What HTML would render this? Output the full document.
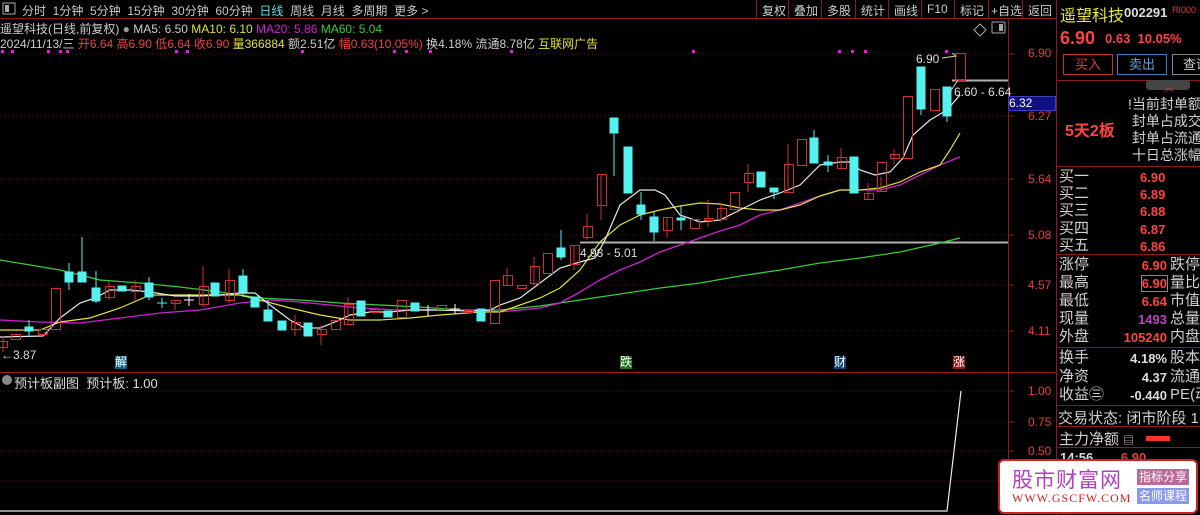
<!DOCTYPE html>
<html><head><meta charset="utf-8"><style>
*{margin:0;padding:0;box-sizing:border-box}
body{width:1200px;height:515px;background:#000;overflow:hidden;position:relative;font-family:"Liberation Sans","Noto Sans CJK SC",sans-serif;color:#ccc}
.a{position:absolute;white-space:nowrap}
.tb{font-size:12px;top:2px;color:#c8c8c8}
.rp{font-size:14px;color:#d0d0d0}
.r{color:#ff4444;font-weight:bold}
.bt{position:absolute;top:0;height:18px;border-left:1px solid #8b1a1a;font-size:12px;color:#ccc;padding:2px 0 0 5px}
</style></head><body>
<svg class="a" style="left:0;top:0" width="1200" height="515">
<line x1="0" y1="18.5" x2="1056" y2="18.5" stroke="#8b1a1a"/>
<line x1="1008.5" y1="18" x2="1008.5" y2="515" stroke="#8b1a1a"/>
<line x1="1056.5" y1="0" x2="1056.5" y2="515" stroke="#8b1a1a"/>
<line x1="0" y1="372.5" x2="1056" y2="372.5" stroke="#a01818"/>
<g stroke="#6a1010" stroke-dasharray="1,3">
<line x1="0" y1="54" x2="1008" y2="54"/><line x1="0" y1="116" x2="1008" y2="116"/><line x1="0" y1="179" x2="1008" y2="179"/><line x1="0" y1="235" x2="1008" y2="235"/><line x1="0" y1="285" x2="1008" y2="285"/><line x1="0" y1="331" x2="1008" y2="331"/>
<line x1="0" y1="391" x2="1008" y2="391"/><line x1="0" y1="422" x2="1008" y2="422"/><line x1="0" y1="451" x2="1008" y2="451"/><line x1="0" y1="481" x2="1008" y2="481"/>
</g>
<g stroke="#a01818"><line x1="1008" y1="54" x2="1014" y2="54"/><line x1="1008" y1="116" x2="1014" y2="116"/><line x1="1008" y1="179" x2="1014" y2="179"/><line x1="1008" y1="235" x2="1014" y2="235"/><line x1="1008" y1="285" x2="1014" y2="285"/><line x1="1008" y1="331" x2="1014" y2="331"/><line x1="1008" y1="391" x2="1014" y2="391"/><line x1="1008" y1="422" x2="1014" y2="422"/><line x1="1008" y1="451" x2="1014" y2="451"/></g>
<g fill="#e020e0">
<rect x="1" y="50" width="3" height="3"/><rect x="11" y="50" width="3" height="3"/><rect x="47" y="50" width="3" height="3"/><rect x="59" y="50" width="3" height="3"/><rect x="66" y="50" width="3" height="3"/><rect x="175" y="50" width="3" height="3"/><rect x="186" y="50" width="3" height="3"/><rect x="301" y="50" width="3" height="3"/><rect x="393" y="50" width="3" height="3"/><rect x="405" y="50" width="3" height="3"/><rect x="429" y="50" width="3" height="3"/><rect x="510" y="50" width="3" height="3"/><rect x="692" y="50" width="3" height="3"/><rect x="838" y="50" width="3" height="3"/><rect x="851" y="50" width="3" height="3"/><rect x="864" y="50" width="3" height="3"/><rect x="945" y="50" width="3" height="3"/>
</g>
<line x1="580" y1="242.5" x2="1008" y2="242.5" stroke="#b0b0b0" stroke-width="2"/>
<line x1="952" y1="80.5" x2="1008" y2="80.5" stroke="#b0b0b0" stroke-width="2"/>
<!-- MA lines -->
<polyline fill="none" stroke="#3cc83c" stroke-width="1.3" points="0,260 60,270 100,280 140,283 180,287 220,292 260,298 300,300 340,303 380,305 420,307 460,310 500,310 540,306 580,300 620,294 660,288 700,283 740,276 780,270 820,263 860,258 900,252 940,243 960,238"/>
<polyline fill="none" stroke="#d020d0" stroke-width="1.3" points="0,320 40,322 80,323 120,318 160,313 200,310 240,303 270,300 300,302 330,305 360,308 400,310 440,310 480,310 500,312 520,310 540,308 560,303 580,292 600,280 620,270 640,262 660,252 680,245 700,238 720,231 740,225 760,215 780,210 800,203 820,196 840,190 860,190 880,190 900,185 920,175 940,165 960,157"/>
<polyline fill="none" stroke="#e0e040" stroke-width="1.2" points="0,330 40,330 60,322 90,318 120,308 150,295 200,295 240,295 260,300 290,308 320,315 350,320 380,320 410,318 440,315 480,312 500,312 520,305 540,298 560,288 580,270 600,242 620,225 640,215 660,210 680,206 700,203 720,204 740,208 760,210 780,210 800,205 820,196 840,190 860,190 880,188 900,182 920,172 940,165 950,150 960,133"/>
<polyline fill="none" stroke="#e8e8e8" stroke-width="1.2" points="0,337 43,336 60,318 80,303 95,298 110,290 130,290 150,292 175,296 200,296 220,295 240,293 255,293 270,305 290,320 305,328 320,328 335,322 350,315 370,312 390,312 410,310 440,310 470,311 490,310 500,305 520,298 540,283 560,268 580,262 595,258 605,240 620,205 640,190 655,190 665,195 680,215 700,222 720,220 740,210 760,200 780,193 800,185 820,165 840,162 850,162 860,170 875,175 890,172 903,158 913,135 930,120 947,110 960,95"/>
<!-- candles -->
<g stroke="#d03030" fill="none">
<line x1="3" y1="336" x2="3" y2="352"/><rect x="-1.5" y="341.5" width="9" height="6"/>
<rect x="11.5" y="334.5" width="9" height="5"/>
<rect x="38.5" y="329.5" width="9" height="5"/>
<rect x="51.5" y="288.5" width="9" height="41"/>
<line x1="109" y1="281" x2="109" y2="300"/><rect x="105.5" y="286.5" width="9" height="11"/>
<line x1="135" y1="280" x2="135" y2="300"/><rect x="131.5" y="286.5" width="9" height="5"/>
<line x1="175" y1="301" x2="175" y2="310"/><rect x="171.5" y="300.5" width="9" height="3"/>
<line x1="203" y1="266" x2="203" y2="307"/><rect x="199.5" y="286.5" width="9" height="18"/>
<line x1="229" y1="269" x2="229" y2="303"/><rect x="225.5" y="280.5" width="9" height="20"/>
<line x1="295" y1="315" x2="295" y2="336"/><rect x="291.5" y="322.5" width="9" height="7"/>
<line x1="321" y1="325" x2="321" y2="345"/><rect x="317.5" y="329.5" width="9" height="5"/>
<rect x="331.5" y="320.5" width="9" height="9"/>
<line x1="348" y1="297" x2="348" y2="324"/><rect x="344.5" y="304.5" width="9" height="20"/>
<rect x="370.5" y="309.5" width="9" height="3"/>
<rect x="397.5" y="300.5" width="9" height="17"/>
<rect x="437.5" y="305.5" width="9" height="4"/>
<rect x="464.5" y="310.5" width="9" height="2"/>
<rect x="490.5" y="280.5" width="9" height="43"/>
<line x1="507" y1="268" x2="507" y2="286"/><rect x="503.5" y="275.5" width="9" height="10"/>
<rect x="517.5" y="285.5" width="9" height="3"/>
<line x1="534" y1="257" x2="534" y2="285"/><rect x="530.5" y="266.5" width="9" height="17"/>
<rect x="543.5" y="253.5" width="9" height="20"/>
<line x1="574" y1="245" x2="574" y2="270"/><rect x="570.5" y="245.5" width="9" height="19"/>
<line x1="587" y1="214" x2="587" y2="240"/><rect x="583.5" y="226.5" width="9" height="11"/>
<line x1="601" y1="174" x2="601" y2="220"/><rect x="597.5" y="174.5" width="9" height="31"/>
<line x1="667" y1="217" x2="667" y2="238"/><rect x="663.5" y="217.5" width="9" height="13"/>
<rect x="690.5" y="219.5" width="9" height="9"/>
<line x1="708" y1="200" x2="708" y2="227"/><rect x="704.5" y="218.5" width="9" height="2"/>
<line x1="721" y1="203" x2="721" y2="222"/><rect x="717.5" y="208.5" width="9" height="11"/>
<rect x="730.5" y="192.5" width="9" height="17"/>
<line x1="748" y1="164" x2="748" y2="192"/><rect x="744.5" y="173.5" width="9" height="9"/>
<line x1="788" y1="144" x2="788" y2="192"/><rect x="784.5" y="164.5" width="9" height="28"/>
<rect x="797.5" y="139.5" width="9" height="26"/>
<line x1="841" y1="148" x2="841" y2="168"/><rect x="837.5" y="157.5" width="9" height="11"/>
<line x1="868" y1="183" x2="868" y2="199"/><rect x="864.5" y="193.5" width="9" height="6"/>
<line x1="881" y1="177" x2="881" y2="191"/><rect x="877.5" y="162.5" width="9" height="29"/>
<line x1="894" y1="149" x2="894" y2="164"/><rect x="890.5" y="154.5" width="9" height="4"/>
<rect x="903.5" y="96.5" width="9" height="62"/>
<rect x="930.5" y="89.5" width="9" height="21"/>
<rect x="955.5" y="53.5" width="10" height="27"/>
</g>
<g fill="#55f0f0" stroke="#55f0f0">
<rect x="25" y="327" width="8" height="4"/><line x1="29" y1="320" x2="29" y2="337"/>
<rect x="65" y="272" width="8" height="10"/><line x1="69" y1="263" x2="69" y2="290"/>
<rect x="78" y="272" width="8" height="10"/><line x1="82" y1="237" x2="82" y2="282"/>
<rect x="92" y="288" width="8" height="13"/><line x1="96" y1="271" x2="96" y2="303"/>
<rect x="118" y="286" width="8" height="5"/>
<rect x="145" y="283" width="8" height="14"/><line x1="149" y1="277" x2="149" y2="300"/>
<line x1="157" y1="303" x2="167" y2="303"/><line x1="162" y1="298" x2="162" y2="308"/>
<line x1="184" y1="300" x2="194" y2="300" stroke="#fff"/><line x1="189" y1="294" x2="189" y2="306" stroke="#fff"/>
<rect x="211" y="283" width="8" height="13"/>
<rect x="239" y="276" width="8" height="16"/><line x1="243" y1="269" x2="243" y2="297"/>
<rect x="251" y="297" width="8" height="10"/>
<rect x="264" y="310" width="8" height="11"/><line x1="268" y1="300" x2="268" y2="321"/>
<rect x="278" y="321" width="8" height="9"/>
<rect x="304" y="323" width="8" height="13"/>
<rect x="357" y="301" width="8" height="15"/>
<rect x="384" y="311" width="8" height="6"/>
<rect x="411" y="303" width="8" height="8"/>
<line x1="423" y1="310" x2="433" y2="310" stroke="#fff"/><line x1="428" y1="305" x2="428" y2="316" stroke="#fff"/>
<line x1="450" y1="309" x2="460" y2="309" stroke="#fff"/><line x1="455" y1="304" x2="455" y2="314" stroke="#fff"/>
<rect x="477" y="309" width="8" height="12"/>
<rect x="557" y="248" width="8" height="9"/><line x1="561" y1="230" x2="561" y2="260"/>
<rect x="610" y="118" width="8" height="15"/><line x1="614" y1="133" x2="614" y2="176"/>
<rect x="624" y="147" width="8" height="46"/>
<rect x="637" y="205" width="8" height="9"/><line x1="641" y1="192" x2="641" y2="220"/>
<rect x="650" y="217" width="8" height="15"/><line x1="654" y1="212" x2="654" y2="241"/>
<rect x="677" y="218" width="8" height="2"/><line x1="681" y1="205" x2="681" y2="230"/>
<rect x="757" y="172" width="8" height="15"/>
<rect x="770" y="188" width="8" height="4"/><line x1="774" y1="188" x2="774" y2="199"/>
<rect x="810" y="138" width="8" height="25"/><line x1="814" y1="130" x2="814" y2="163"/>
<rect x="824" y="162" width="8" height="3"/><line x1="828" y1="155" x2="828" y2="172"/>
<rect x="850" y="157" width="8" height="36"/>
<rect x="917" y="67" width="8" height="42"/><line x1="921" y1="109" x2="921" y2="115"/>
<rect x="943" y="87" width="8" height="29"/><line x1="947" y1="116" x2="947" y2="122"/>
</g>
<polyline fill="none" stroke="#e8e8e8" stroke-width="1.2" points="0,511 947,511 961,391"/>
<polyline fill="none" stroke="#ccc" points="942,58 956,56 952,53"/>
<polyline fill="none" stroke="#ccc" points="950,92 958,80"/>
<path d="M828 84 l6 -6 l6 6 l-6 6z" fill="none" stroke="#aaa" transform="translate(146,-54)"/>
<rect x="992" y="22" width="13" height="11" fill="none" stroke="#aaa" rx="1"/><rect x="999" y="24" width="4" height="7" fill="#aaa"/>
<rect x="3" y="3" width="12" height="11" fill="none" stroke="#aaa"/><rect x="5" y="5" width="4" height="7" fill="#aaa"/>
<rect x="1008.5" y="96.5" width="47" height="14" fill="#101080" stroke="#4040c0"/>
<line x1="1057" y1="80.5" x2="1200" y2="80.5" stroke="#8b1a1a"/>
<line x1="1057" y1="166.5" x2="1200" y2="166.5" stroke="#8b1a1a"/>
<line x1="1057" y1="254.5" x2="1200" y2="254.5" stroke="#8b1a1a"/>
<line x1="1057" y1="347.5" x2="1200" y2="347.5" stroke="#8b1a1a"/>
<line x1="1057" y1="405.5" x2="1200" y2="405.5" stroke="#8b1a1a"/>
<line x1="1057" y1="426.5" x2="1200" y2="426.5" stroke="#8b1a1a"/>
<line x1="1057" y1="447.5" x2="1200" y2="447.5" stroke="#8b1a1a"/>
<rect x="1146" y="80" width="44" height="10" rx="3" fill="#444"/>
<rect x="1146" y="436" width="24" height="5" fill="#ff3030"/>
<circle cx="7" cy="380" r="5" fill="#888"/>
</svg>
<div class="a tb" style="left:22px">分时&nbsp; 1分钟&nbsp; 5分钟&nbsp; 15分钟&nbsp; 30分钟&nbsp; 60分钟&nbsp; <span style="color:#5ee0f0">日线</span>&nbsp; 周线&nbsp; 月线&nbsp; 多周期&nbsp; 更多 &gt;</div>
<div class="bt" style="left:756px">复权</div><div class="bt" style="left:788px">叠加</div><div class="bt" style="left:821px">多股</div><div class="bt" style="left:855px">统计</div><div class="bt" style="left:888px">画线</div><div class="bt" style="left:921px">F10</div><div class="bt" style="left:954px">标记</div><div class="bt" style="left:988px;padding-left:2px">+自选</div><div class="bt" style="left:1022px">返回</div>
<div class="a" style="left:0;top:20px;font-size:12px;color:#ccc">遥望科技(日线,前复权) <span style="color:#999">●</span> MA5: 6.50 <span style="color:#e0e040">MA10: 6.10</span> <span style="color:#d020d0">MA20: 5.86</span> <span style="color:#3cc83c">MA60: 5.04</span></div>
<div class="a" style="left:0;top:35px;font-size:12px;color:#ccc">2024/11/13/三 <span style="color:#f04040">开6.64 高6.90 低6.64 收6.90</span> <span style="color:#e0e040">量366884</span> 额2.51亿 <span style="color:#f04040">幅0.63(10.05%)</span> 换4.18% 流通8.78亿 <span style="color:#e0e040">互联网广告</span></div>
<div class="a" style="left:916px;top:52px;font-size:12px;color:#ddd">6.90</div>
<div class="a" style="left:954px;top:85px;font-size:12px;color:#ddd">6.60 - 6.64</div>
<div class="a" style="left:580px;top:246px;font-size:12px;color:#ddd">4.98 - 5.01</div>
<div class="a" style="left:1px;top:348px;font-size:12px;color:#ddd">←3.87</div>
<div class="a" style="left:115px;top:356px;font-size:12px;background:#106080;color:#fff;line-height:13px">解</div>
<div class="a" style="left:620px;top:356px;font-size:12px;background:#207020;color:#fff;line-height:13px">跌</div>
<div class="a" style="left:834px;top:356px;font-size:12px;background:#104070;color:#fff;line-height:13px">财</div>
<div class="a" style="left:953px;top:356px;font-size:12px;background:#901818;color:#fff;line-height:13px">涨</div>
<div class="a" style="left:14px;top:373px;font-size:13px;color:#ddd">预计板副图&nbsp; 预计板: 1.00</div>
<div class="a" style="left:1028px;top:46px;font-size:12px;color:#e04040">6.90</div>
<div class="a" style="left:1028px;top:109px;font-size:12px;color:#e04040">6.27</div>
<div class="a" style="left:1028px;top:172px;font-size:12px;color:#e04040">5.64</div>
<div class="a" style="left:1028px;top:228px;font-size:12px;color:#e04040">5.08</div>
<div class="a" style="left:1028px;top:278px;font-size:12px;color:#e04040">4.57</div>
<div class="a" style="left:1028px;top:324px;font-size:12px;color:#e04040">4.11</div>
<div class="a" style="left:1009px;top:96px;font-size:12px;color:#fff">6.32</div>
<div class="a" style="left:1028px;top:384px;font-size:12px;color:#e04040">1.00</div>
<div class="a" style="left:1028px;top:415px;font-size:12px;color:#e04040">0.75</div>
<div class="a" style="left:1028px;top:444px;font-size:12px;color:#e04040">0.50</div>
<div class="a" style="left:1060px;top:2px;font-size:16px;color:#e8e840">遥望科技</div>
<div class="a" style="left:1124px;top:5px;font-size:13px;color:#ddd;font-weight:bold">002291</div>
<div class="a" style="left:1172px;top:5px;font-size:9px;color:#e04040">RI000</div>
<div class="a r" style="left:1060px;top:28px;font-size:18px">6.90</div>
<div class="a r" style="left:1105px;top:31px;font-size:13px">0.63&nbsp; 10.05%</div>
<div class="a" style="left:1063px;top:54px;width:50px;height:21px;border:1px solid #c03030;color:#e04040;font-size:13px;text-align:center;line-height:19px">买入</div>
<div class="a" style="left:1117px;top:54px;width:50px;height:21px;border:1px solid #4080c0;color:#60a0e0;font-size:13px;text-align:center;line-height:19px">卖出</div>
<div class="a" style="left:1172px;top:54px;width:40px;height:21px;border:1px solid #888;color:#ccc;font-size:13px;padding-left:10px;line-height:19px">查询</div>
<div class="a" style="left:1164px;top:79px;font-size:10px;color:#c04040">︽</div>
<div class="a r" style="left:1065px;top:117px;font-size:16px">5天2板</div>
<div class="a rp" style="left:1128px;top:96px;line-height:17px">!当前封单额<br>&nbsp;封单占成交<br>&nbsp;封单占流通Z<br>&nbsp;十日总涨幅</div>
<div class="a rp" style="left:1059px;top:168px;line-height:17.2px;font-size:15px">买一<br>买二<br>买三<br>买四<br>买五</div>
<div class="a r" style="left:1140px;top:169px;line-height:17.2px;font-size:13px">6.90<br>6.89<br>6.88<br>6.87<br>6.86</div>
<div class="a rp" style="left:1059px;top:256px;line-height:18px;font-size:15px">涨停<br>最高<br>最低<br>现量<br>外盘</div>
<div class="a r" style="left:1110px;top:257px;line-height:18px;font-size:13px;text-align:right;width:57px">6.90<br><span style="outline:1px solid #888">6.90</span><br>6.64<br><span style="color:#c040c0">1493</span><br>105240</div>
<div class="a rp" style="left:1170px;top:256px;line-height:18px;font-size:15px">跌停<br>量比<br>市值<br>总量<br>内盘</div>
<div class="a rp" style="left:1059px;top:349px;line-height:18.5px;font-size:15px">换手<br>净资<br>收益㊂</div>
<div class="a" style="left:1100px;top:350px;line-height:18.5px;font-size:13px;color:#ddd;font-weight:bold;text-align:right;width:67px">4.18%<br>4.37<br>-0.440</div>
<div class="a rp" style="left:1170px;top:349px;line-height:18.5px;font-size:15px">股本<br>流通<br>PE(动</div>
<div class="a rp" style="left:1058px;top:407px;font-size:15px">交易状态: 闭市阶段 1</div>
<div class="a rp" style="left:1059px;top:428px;font-size:15px">主力净额 <span style="font-size:11px">▤</span></div>
<div class="a" style="left:1060px;top:450px;font-size:13px;color:#ddd;font-weight:bold">14:56 <span style="color:#e04040;margin-left:24px">6.90</span></div>
<div class="a" style="left:998px;top:459px;width:200px;height:55px;background:#fff;border:2px solid #d02020;border-radius:6px">
<div class="a" style="left:12px;top:3px;font-size:21px;color:#b040c0;letter-spacing:1px">股市财富网</div>
<div class="a" style="left:12px;top:30px;font-size:12px;color:#d02020;font-family:'Liberation Serif',serif;letter-spacing:1px">WWW.GSCFW.COM</div>
<div class="a" style="left:137px;top:8px;width:52px;height:16px;background:#b86a9a;color:#fff;font-size:12px;text-align:center;line-height:16px">指标分享</div>
<div class="a" style="left:137px;top:27px;width:52px;height:16px;background:#8a9ae8;color:#fff;font-size:12px;text-align:center;line-height:16px">名师课程</div>
</div>
</body></html>
